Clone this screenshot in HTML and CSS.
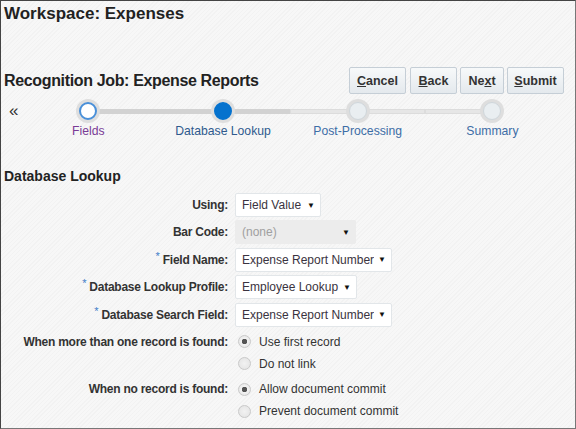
FILE: index.html
```html
<!DOCTYPE html>
<html lang="en">
<head>
    <meta charset="UTF-8">
    <title>Workspace: Expenses</title>
    <link rel="stylesheet" href="styles.css">
</head>
<body>
<div class="frame">
    <h1 class="workspace">Workspace: Expenses</h1>

    <div class="job-bar">
        <h2 class="job-title">Recognition Job: Expense Reports</h2>
        <div class="buttons">
            <button class="button b-cancel"><u>C</u>ancel</button>
            <button class="button b-back"><u>B</u>ack</button>
            <button class="button b-next">Ne<u>x</u>t</button>
            <button class="button b-submit"><u>S</u>ubmit</button>
        </div>
    </div>

    <div class="train">
        <span class="train-back">&laquo;</span>
        <div class="steps">
            <div class="step visited">
                <span class="dot"></span>
                <span class="step-label">Fields</span>
            </div>
            <div class="step current">
                <span class="dot"></span>
                <span class="step-label">Database Lookup</span>
            </div>
            <div class="step">
                <span class="dot"></span>
                <span class="step-label">Post-Processing</span>
            </div>
            <div class="step">
                <span class="dot"></span>
                <span class="step-label">Summary</span>
            </div>
        </div>
    </div>

    <h3 class="section-title">Database Lookup</h3>

    <div class="form">
        <label class="form-label">Using:</label>
        <div class="select sel-using"><span>Field Value</span><i>&#9660;</i></div>

        <label class="form-label">Bar Code:</label>
        <div class="select disabled sel-barcode"><span>(none)</span><i>&#9660;</i></div>

        <label class="form-label"><sup>*</sup> Field Name:</label>
        <div class="select sel-wide"><span>Expense Report Number</span><i>&#9660;</i></div>

        <label class="form-label"><sup>*</sup> Database Lookup Profile:</label>
        <div class="select sel-profile"><span>Employee Lookup</span><i>&#9660;</i></div>

        <label class="form-label"><sup>*</sup> Database Search Field:</label>
        <div class="select sel-wide"><span>Expense Report Number</span><i>&#9660;</i></div>

        <label class="form-label radio-label first-group">When more than one record is found:</label>
        <div class="radios first-group">
            <div class="radio checked"><span class="circle"></span>Use first record</div>
            <div class="radio"><span class="circle"></span>Do not link</div>
        </div>

        <label class="form-label radio-label">When no record is found:</label>
        <div class="radios">
            <div class="radio checked"><span class="circle"></span>Allow document commit</div>
            <div class="radio"><span class="circle"></span>Prevent document commit</div>
        </div>
    </div>
</div>
</body>
</html>
```

FILE: styles.css
```css
html, body {
    margin: 0;
    padding: 0;
}
body {
    font-family: "Liberation Sans", Arial, sans-serif;
    color: #333;
}
.frame {
    box-sizing: border-box;
    width: 576px;
    height: 429px;
    border: 1px solid #444;
    border-right-color: #777;
    border-bottom-color: #777;
    padding: 0 11px 0 3px;
    overflow: hidden;
    background-color: #f7f7f7;
    background-image: repeating-linear-gradient(135deg, rgba(0,0,0,0.018) 0 1px, transparent 1px 3px);
}
.workspace {
    margin: 0;
    padding-top: 3px;
    font-size: 17px;
    line-height: 20px;
    color: #222;
}
.job-bar {
    display: flex;
    justify-content: space-between;
    align-items: center;
    margin-top: 43px;
}
.job-title {
    margin: 0;
    font-size: 16px;
    letter-spacing: -0.35px;
    line-height: 20px;
    color: #222;
}
.buttons {
    display: flex;
    gap: 3px;
}
.button {
    height: 27px;
    padding: 0;
    font-family: inherit;
    font-size: 12.5px;
    font-weight: bold;
    color: #333;
    background: linear-gradient(#f7f9fa, #e4e9ed);
    border: 1px solid #c5ced6;
    border-radius: 2px;
}
.button u {
    text-decoration-thickness: 1px;
}
.b-cancel { width: 57px; }
.b-back { width: 47px; margin-left: 1px; }
.b-next { width: 44px; }
.b-submit { width: 57px; }

.train {
    display: flex;
    align-items: flex-start;
    margin-top: 4px;
    height: 36px;
}
.train-back {
    width: 16px;
    margin-left: 5px;
    font-size: 17px;
    line-height: 26px;
    color: #333;
}
.steps {
    display: grid;
    grid-template-columns: repeat(4, 134.7px);
    margin-left: -4px;
}
.step {
    position: relative;
    display: flex;
    flex-direction: column;
    align-items: center;
}
.step::before, .step::after {
    content: "";
    position: absolute;
    top: 11px;
    height: 5px;
    background: #e6e6e6;
    box-shadow: inset 0 0 0 1px #dcdcdc;
}
.step::before { left: 0; right: 50%; }
.step::after { left: 50%; right: 0; }
.step:first-child::before, .step:last-child::after { display: none; }
.step.visited::after, .step.current::before, .step.current::after {
    background: #d2d2d2;
    box-shadow: none;
}
.dot {
    position: relative;
    z-index: 1;
    box-sizing: border-box;
    width: 18px;
    height: 18px;
    margin-top: 4px;
    border-radius: 50%;
    background: #e9eef1;
    border: 1px solid #cfd6db;
    box-shadow: 0 0 0 3px #dedede;
}
.visited .dot {
    background: #fff;
    border: 2px solid #4a90d9;
}
.current .dot {
    background: #0572ce;
    border: 2px solid #0572ce;
}
.step-label {
    margin-top: 4px;
    font-size: 12.2px;
    line-height: 14px;
    color: #3d6da6;
    white-space: nowrap;
}
.visited .step-label { color: #7a3b96; }
.current .step-label { color: #2f5a8e; }

.section-title {
    margin: 33px 0 0;
    font-size: 14px;
    line-height: 18px;
    color: #222;
}
.form {
    display: grid;
    grid-template-columns: 224px auto;
    column-gap: 7px;
    row-gap: 3.4px;
    align-items: center;
    margin-top: 8px;
}
.form-label {
    text-align: right;
    font-size: 12px;
    letter-spacing: -0.25px;
    font-weight: bold;
    color: #333;
    white-space: nowrap;
}
.form-label sup {
    color: #3d7cc9;
    font-size: 11px;
    font-weight: normal;
    vertical-align: 4px;
    line-height: 0;
}
.select {
    box-sizing: border-box;
    display: flex;
    align-items: center;
    height: 24px;
    padding: 0 5px 0 6px;
    font-size: 12px;
    color: #3a3340;
    white-space: nowrap;
    background: #fff;
    border: 1px solid #e2e6e9;
    border-radius: 2px;
}
.select span {
    flex: 1;
    overflow: hidden;
}
.select i {
    flex: none;
    font-style: normal;
    font-size: 8px;
    color: #111;
    margin-left: 4px;
}
.select.disabled {
    background: #ececec;
    border-color: #ececec;
    color: #a0a0a0;
}
.sel-using { width: 86px; }
.sel-barcode { width: 121px; }
.sel-wide { width: 157px; }
.sel-profile { width: 122px; }

.radio-label {
    align-self: start;
    line-height: 22px;
}
.radios {
    display: flex;
    flex-direction: column;
}
.first-group {
    margin-top: 1px;
}
.radio {
    display: flex;
    align-items: center;
    height: 22px;
    font-size: 12px;
    color: #333;
    white-space: nowrap;
}
.circle {
    box-sizing: border-box;
    width: 13px;
    height: 13px;
    margin: 0 8px 0 3px;
    border-radius: 50%;
    border: 1px solid #c9c9c9;
    background: radial-gradient(circle, #f2f2f2, #e2e2e2);
}
.radio.checked .circle {
    background: radial-gradient(circle, #555 0 2.5px, #f2f2f2 3px, #e2e2e2);
}
```
